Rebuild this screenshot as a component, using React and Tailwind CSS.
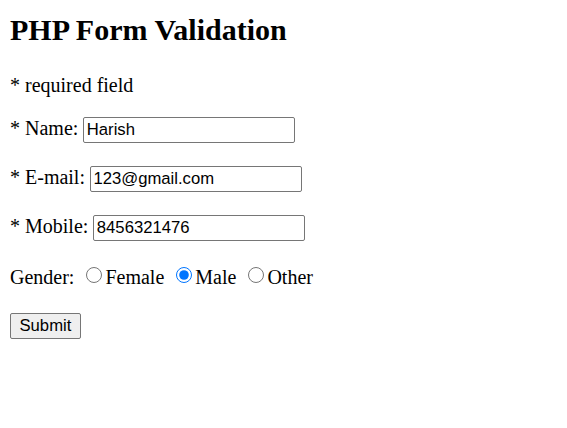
export default function App() {
  const field =
    "w-[212px] h-[26px] border border-[#767676] rounded-[2px] px-[2.5px] py-[1.25px] text-[16.67px] font-['Liberation_Sans',Arial,sans-serif] text-black bg-white align-baseline";
  const radio = "w-[16px] h-[16px] ml-[6.25px] mr-[3.75px] mt-[3.75px] align-baseline";

  return (
    <div className="min-h-screen bg-white px-[10px] text-black font-['Liberation_Serif','Times_New_Roman',serif] text-[20px] leading-[normal]">
      <h2 className="pt-[12.5px] mb-[27px] text-[30px] font-bold leading-[normal]">PHP Form Validation</h2>
      <p className="mb-[20px]">
        <span>* required field</span>
      </p>
      <form onSubmit={(e) => e.preventDefault()}>
        * Name: <input type="text" className={field} defaultValue="Harish" />
        <br />
        <br />
        * E-mail: <input type="text" className={field} defaultValue="123@gmail.com" />
        <br />
        <br />
        * Mobile: <input type="text" className={field} defaultValue="8456321476" />
        <br />
        <br />
        Gender: <input type="radio" name="gender" className={radio} />Female{" "}
        <input type="radio" name="gender" className={radio} defaultChecked />Male{" "}
        <input type="radio" name="gender" className={radio} />Other
        <br />
        <br />
        <button
          type="submit"
          className="mt-[2px] h-[26px] px-[8.5px] py-[1.25px] border border-[#767676] rounded-[2px] bg-[#efefef] text-[16.67px] font-['Liberation_Sans',Arial,sans-serif] text-black"
        >
          Submit
        </button>
      </form>
    </div>
  );
}
